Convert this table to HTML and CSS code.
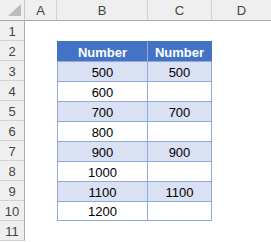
FILE: index.html
```html
<!DOCTYPE html>
<html>
<head>
  <meta charset="UTF-8" />
  <title>Sheet</title>
  <link rel="stylesheet" href="styles.css">
</head>
<body>
  <div class="sheet" id="sheet">
    <!-- заголовки столбцов -->
    <div class="corner">
      <svg width="14" height="13" viewBox="0 0 14 13"><polygon points="13,0 13,12 0,12" fill="#bcbcbc"/></svg>
    </div>
    <div class="col-head">A</div>
    <div class="col-head">B</div>
    <div class="col-head">C</div>
    <div class="col-head">D</div>
  </div>

  <script>
    const sheet = document.getElementById('sheet');
    const rows = [
      null,
      ['Number', 'Number'],
      ['500', '500'],
      ['600', ''],
      ['700', '700'],
      ['800', ''],
      ['900', '900'],
      ['1000', ''],
      ['1100', '1100'],
      ['1200', ''],
      null
    ];

    rows.forEach((row, i) => {
      const n = i + 1;
      const head = document.createElement('div');
      head.className = 'row-head';
      head.textContent = n;
      sheet.appendChild(head);

      sheet.appendChild(Object.assign(document.createElement('div'), { className: 'cell' }));

      ['b', 'c'].forEach((col, j) => {
        const cell = document.createElement('div');
        cell.className = 'cell';
        if (row) {
          cell.classList.add('tbl', 'tbl-' + col);
          if (n === 2) cell.classList.add('tbl-head');
          else if (n % 2 === 1) cell.classList.add('band');
          if (n === 10) cell.classList.add('last');
          cell.textContent = row[j];
        }
        sheet.appendChild(cell);
      });

      sheet.appendChild(Object.assign(document.createElement('div'), { className: 'cell' }));
    });
  </script>
</body>
</html>
```

FILE: styles.css
```css
body {
  margin: 0;
  background: #fff;
  font-family: "Liberation Sans", Arial, sans-serif;
  overflow: hidden;
}

.sheet {
  display: grid;
  grid-template-columns: 25px 32px 91px 64px 60px;
  grid-template-rows: 21px repeat(11, 20px);
  width: 272px;
}

.corner,
.col-head,
.row-head {
  box-sizing: border-box;
  background: #efefef;
  color: #444;
  font-size: 13px;
  display: flex;
  align-items: center;
  justify-content: center;
}

.corner {
  border-right: 1px solid #c6c6c6;
  border-bottom: 1px solid #a9a9a9;
  align-items: flex-end;
  justify-content: flex-end;
  padding: 0 2px 3px 0;
}

.col-head {
  border-right: 1px solid #d2d2d2;
  border-bottom: 1px solid #a9a9a9;
}

.row-head {
  border-right: 1px solid #a9a9a9;
  border-bottom: 1px solid #d2d2d2;
  padding-top: 1px;
}

.cell {
  box-sizing: border-box;
  font-size: 13px;
  color: #000;
  display: flex;
  align-items: center;
  justify-content: center;
}

.tbl {
  border-top: 1px solid #8ea9db;
  border-right: 1px solid #8ea9db;
  padding-top: 1px;
}

.tbl-b {
  border-left: 1px solid #8ea9db;
}

.tbl-head {
  background: #4472c4;
  border-top-color: #4472c4;
  color: #fff;
  font-weight: bold;
}

.tbl-b.tbl-head {
  border-left-color: #4472c4;
  border-right-color: #8ea9db;
}

.tbl-c.tbl-head {
  border-right-color: #4472c4;
}

.band {
  background: #d9e1f2;
}

.last {
  border-bottom: 1px solid #8ea9db;
}
```
